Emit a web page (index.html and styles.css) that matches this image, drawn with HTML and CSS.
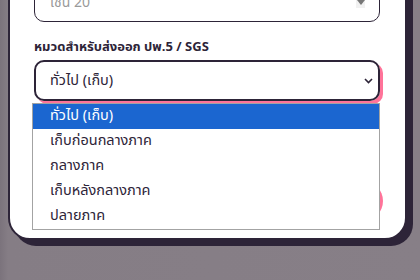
FILE: index.html
```html
<!DOCTYPE html>
<html lang="th">
<head>
    <meta charset="UTF-8">
    <meta name="viewport" content="width=device-width, initial-scale=1.0">
    <title>ตั้งค่าคะแนน</title>
    <link rel="stylesheet" href="styles.css">
</head>
<body>
    <div class="backdrop">
        <div class="modal">
            <div class="field">
                <label class="field-label">คะแนนเต็ม</label>
                <div class="input-box">
                    <span class="placeholder">เช่น 20</span>
                    <span class="picker"></span>
                </div>
            </div>

            <div class="field">
                <label class="field-label">หมวดสำหรับส่งออก ปพ.5 / SGS</label>
                <div class="select-wrap">
                    <div class="select-box">
                        <span class="select-value">ทั่วไป (เก็บ)</span>
                        <svg class="chevron" width="9" height="6" viewBox="0 0 9 6">
                            <path d="M1 1 L4.5 4.5 L8 1" fill="none" stroke="#2d2438" stroke-width="1.6"/>
                        </svg>
                    </div>
                    <ul class="options">
                        <li class="option selected">ทั่วไป (เก็บ)</li>
                        <li class="option">เก็บก่อนกลางภาค</li>
                        <li class="option">กลางภาค</li>
                        <li class="option">เก็บหลังกลางภาค</li>
                        <li class="option">ปลายภาค</li>
                    </ul>
                </div>
            </div>

            <div class="actions">
                <button class="btn btn-cancel">ยกเลิก</button>
                <button class="btn btn-save">บันทึก</button>
            </div>
        </div>
    </div>
</body>
</html>
```

FILE: styles.css
```css
* {
    margin: 0;
    padding: 0;
    box-sizing: border-box;
}

body {
    font-family: "Noto Sans Thai", "Noto Sans", sans-serif;
    background: #867e86;
    color: #2d2438;
}

.backdrop {
    height: 280px;
    overflow: hidden;
    background: linear-gradient(90deg, #7b737c 0px, #857d85 8px, #877f87 100%);
}

.modal {
    width: 399px;
    margin: -66px 0 0 8px;
    background: white;
    border: 2px solid #2d2438;
    border-radius: 22px;
    box-shadow: 6px 6px 0 #2d2438;
    padding: 20px 25px 21px 24px;
}

.field {
    margin-bottom: 15px;
}

.field-label {
    display: block;
    font-size: 13px;
    font-weight: 700;
    line-height: 20px;
    margin-bottom: 3px;
}

.field:first-child .field-label {
    margin-bottom: 6px;
}

.input-box {
    height: 40px;
    border: 1.5px solid #2d2438;
    border-radius: 10px;
    display: flex;
    align-items: center;
    justify-content: space-between;
    padding: 0 14px 0 0;
}

.placeholder {
    margin-left: 15px;
    color: #9a9a9a;
    font-size: 14px;
}

.picker {
    width: 9px;
    height: 12px;
    background: #f1f1f1;
    position: relative;
}

.picker::after {
    content: "";
    position: absolute;
    left: 1px;
    top: 4px;
    border-left: 4px solid transparent;
    border-right: 4px solid transparent;
    border-top: 5px solid #777;
}

.select-wrap {
    position: relative;
}

.select-box {
    height: 41px;
    border: 2px solid #2d2438;
    border-radius: 10px;
    box-shadow: 3px 3px 0 #ff7399;
    display: flex;
    align-items: center;
    justify-content: space-between;
    padding-right: 5px;
    font-size: 14.5px;
}

.select-value {
    margin-left: 14px;
}

.options {
    list-style: none;
    position: absolute;
    top: 43px;
    left: -2px;
    width: 348px;
    background: white;
    border: 1px solid #a3a3a3;
    z-index: 2;
}

.option {
    height: 25px;
    line-height: 25px;
    text-indent: 17px;
    font-size: 14.5px;
    color: #2d2438;
}

.option.selected {
    background: #1b66d0;
    color: white;
}

.actions {
    display: flex;
    justify-content: flex-end;
    gap: 20px;
    margin-top: 76px;
}

.btn {
    height: 40px;
    border-radius: 20px;
    font-family: inherit;
    font-size: 15px;
    font-weight: 700;
}

.btn-cancel {
    width: 77px;
    background: #2d2438;
    color: white;
    border: none;
    box-shadow: 0 3px 0 #2d2438;
}

.btn-save {
    width: 110px;
    background: white;
    color: #2d2438;
    border: 2px solid #2d2438;
    box-shadow: 3px 4px 0 #ff7399;
}
```
